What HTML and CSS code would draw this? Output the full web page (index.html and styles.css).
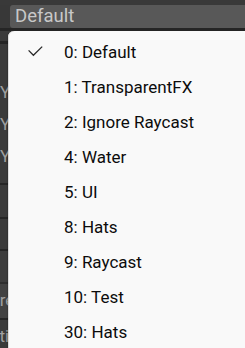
FILE: index.html
```html
<!DOCTYPE html>
<html>
<head>
<meta charset="utf-8">
<link rel="stylesheet" href="styles.css">
</head>
<body>
<div class="inspector">
  <div class="gap-top"></div>
  <div class="field-row">
    <span class="cut-label">r</span>
    <div class="field">Default</div>
  </div>
  <div class="line line-3"></div>
  <div class="strip h10"></div>
  <div class="line line-3"></div>
  <div class="strip h32"></div>
  <div class="strip h32 lbl">Y</div>
  <div class="strip h32 lbl">Y</div>
  <div class="strip h32 lbl">Y</div>
  <div class="strip h11"></div>
  <div class="line"></div>
  <div class="strip h32"></div>
  <div class="line"></div>
  <div class="strip h30"></div>
  <div class="line"></div>
  <div class="strip h31 lighter"></div>
  <div class="line soft"></div>
  <div class="strip h34 lbl lighter2"><span class="cut">Pre</span></div>
  <div class="line"></div>
  <div class="strip h28 lbl"><span class="cut">Rti</span></div>
</div>

<div class="menu">
  <div class="item">
    <span class="check"><svg width="15" height="11" viewBox="0 0 15 11"><path d="M0.6 4.4 L5.4 9.3 L14.2 0.6" fill="none" stroke="#2a2a2a" stroke-width="1.3"/></svg></span>
    <span class="text">0: Default</span>
  </div>
  <div class="item"><span class="check"></span><span class="text">1: TransparentFX</span></div>
  <div class="item"><span class="check"></span><span class="text">2: Ignore Raycast</span></div>
  <div class="item"><span class="check"></span><span class="text">4: Water</span></div>
  <div class="item"><span class="check"></span><span class="text">5: UI</span></div>
  <div class="item"><span class="check"></span><span class="text">8: Hats</span></div>
  <div class="item"><span class="check"></span><span class="text">9: Raycast</span></div>
  <div class="item"><span class="check"></span><span class="text">10: Test</span></div>
  <div class="item"><span class="check"></span><span class="text">30: Hats</span></div>
</div>
</body>
</html>
```

FILE: styles.css
```css
html, body {
  margin: 0;
  padding: 0;
}
body {
  width: 245px;
  height: 348px;
  overflow: hidden;
  position: relative;
  background: #383838;
  font-family: Roboto, "Noto Sans", sans-serif;
}
.inspector {
  display: flex;
  flex-direction: column;
}
.gap-top {
  height: 5px;
  background: #393939;
}
.field-row {
  height: 23px;
  display: flex;
  align-items: stretch;
  overflow: hidden;
}
.cut-label {
  width: 10px;
  margin-left: -6px;
  color: #a8a8a8;
  font-size: 17px;
  line-height: 23px;
  overflow: hidden;
}
.field {
  flex: 1;
  margin-left: 6px;
  background: #585858;
  border-radius: 3px 0 0 3px;
  color: #c8c8c8;
  font-size: 18.5px;
  line-height: 23px;
  padding-left: 5px;
}
.line {
  height: 2px;
  background: #252525;
}
.line-3 {
  height: 3px;
}
.line.soft {
  background: #2e2e2e;
}
.strip {
  overflow: hidden;
  white-space: nowrap;
  background: #3a3a3a;
}
.lighter { background: #3d3d3d; }
.lighter2 { background: #424242; }
.h10 { height: 10px; }
.h11 { height: 11px; }
.h28 { height: 28px; }
.h30 { height: 30px; }
.h31 { height: 31px; }
.h32 { height: 32px; }
.h34 { height: 34px; }
.lbl {
  color: #a0a0a0;
  font-size: 17px;
  line-height: 32px;
}
.cut {
  display: inline-block;
  margin-left: -11px;
}
.menu {
  position: absolute;
  left: 8px;
  top: 31px;
  right: 0;
  bottom: 0;
  background: #f9f9f9;
  border-top-left-radius: 6px;
  box-shadow: -1px 0 1px rgba(0, 0, 0, 0.15), inset 1px 0 0 #dcdcdc;
  padding-top: 3px;
  color: #0c0c0c;
}
.item {
  height: 35px;
  display: flex;
  align-items: center;
  font-size: 17px;
}
.check {
  width: 56px;
  padding-left: 20px;
  box-sizing: border-box;
  display: flex;
  align-items: center;
}
.check svg {
  display: block;
}
.text {
  white-space: nowrap;
}
```
